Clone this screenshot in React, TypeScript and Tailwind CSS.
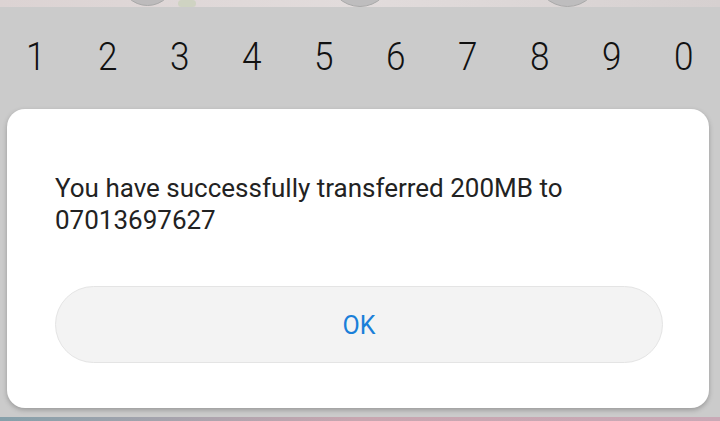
import React from "react";

export default function App() {
  const digits = ["1", "2", "3", "4", "5", "6", "7", "8", "9", "0"];
  return (
    <div
      className="w-[720px] h-[421px] overflow-hidden bg-[#cbcbcb] flex flex-col"
      style={{ fontFamily: "Roboto, 'Noto Sans', sans-serif" }}
    >
      {/* top image strip */}
      <div className="relative h-[7px] w-full overflow-hidden bg-gradient-to-r from-[#dcd3d3] via-[#e2dcdc] to-[#d6d0d0]">
        <div className="absolute left-[120px] top-[-49px] w-[55px] h-[55px] rounded-full bg-[#bdbbbc] border border-[#a9a9a9]" />
        <div className="absolute left-[178px] top-0 w-[18px] h-[7px] bg-[#cfd3c2] rounded-sm" />
        <div className="absolute left-[328px] top-[-57px] w-[64px] h-[64px] rounded-full bg-[#bebdbe] border border-[#a9a9a9]" />
        <div className="absolute left-[535px] top-[-58px] w-[65px] h-[65px] rounded-full bg-[#bebdbe] border border-[#a9a9a9]" />
      </div>

      <div className="flex-1 flex flex-col">
        <div className="grid grid-cols-10 mt-[31px] h-[39px]">
          {digits.map((d) => (
            <div
              key={d}
              className="text-center text-[39px] leading-[39px] font-light text-[#111111]"
            >
              <span className="inline-block scale-x-[0.9]">{d}</span>
            </div>
          ))}
        </div>

        <div className="mt-[32px] mx-[7px] w-[702px] h-[299px] bg-white rounded-[18px] shadow-[0_2px_5px_rgba(0,0,0,0.25)] pl-[48px] pr-[46px] pt-[63px]">
          <p className="text-[26px] leading-[32px] text-[#222222]">
            You have successfully transferred 200MB to 07013697627
          </p>
          <div className="mt-[50px] h-[77px] rounded-full bg-[#f3f3f3] border border-[#e4e4e4] flex items-center justify-center pt-[3px]">
            <span className="text-[25px] text-[#1a7fd9]">OK</span>
          </div>
        </div>
      </div>

      <div className="h-[4px] w-full bg-gradient-to-r from-[#86a0aa] via-[#c8a6b0] to-[#c9a9b6]" />
    </div>
  );
}
